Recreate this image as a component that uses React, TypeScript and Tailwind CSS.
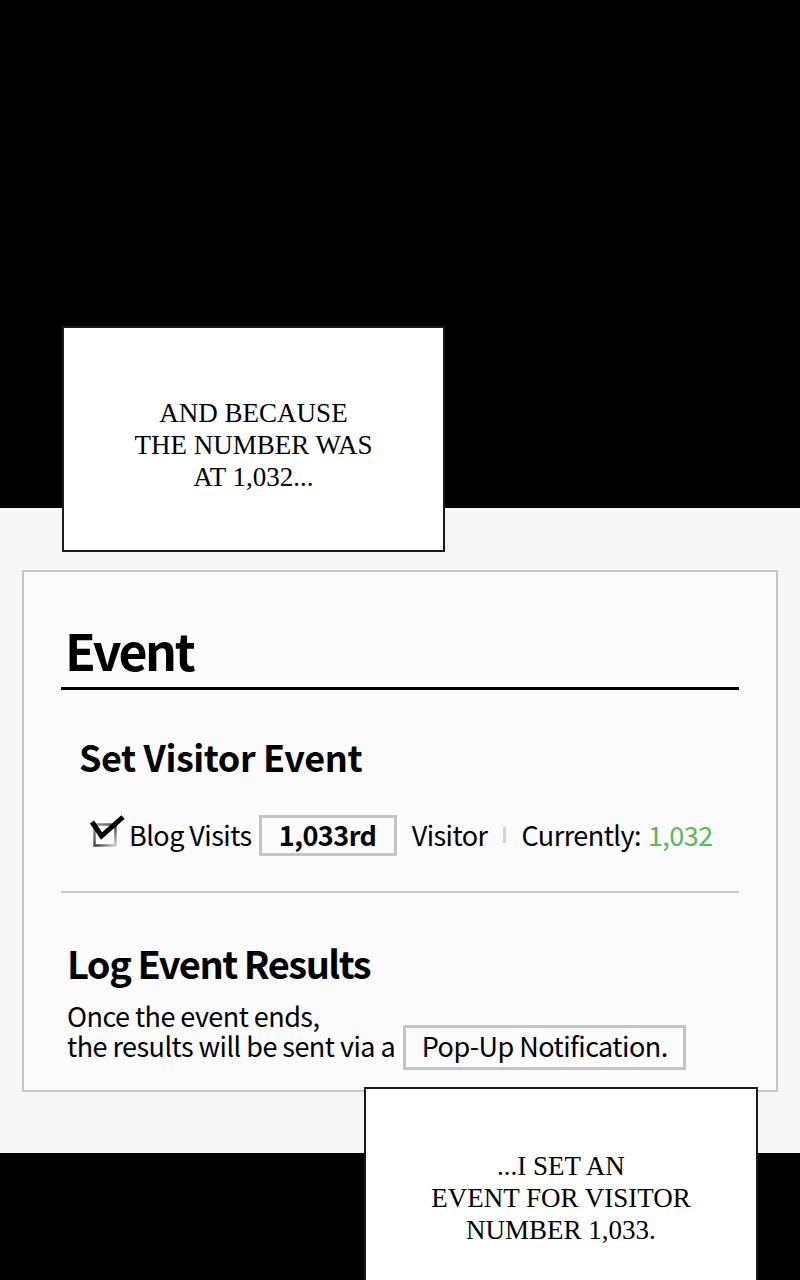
import React from 'react';

const caption = "font-['Liberation_Serif',serif] text-[27px] leading-[32px] text-black text-center uppercase";
const ui = "font-['Noto_Sans_CJK_KR','Noto_Sans',sans-serif] text-black";

function CheckMark() {
  return (
    <svg width="36" height="36" viewBox="0 0 36 36" className="shrink-0 overflow-visible">
      <defs>
        <linearGradient id="boxEdge" x1="0" y1="0" x2="1" y2="1">
          <stop offset="0" stopColor="#a0a0a0" />
          <stop offset="0.55" stopColor="#444" />
          <stop offset="1" stopColor="#d0d0d0" />
        </linearGradient>
      </defs>
      <rect x="4.5" y="7.5" width="21" height="21" fill="none" stroke="url(#boxEdge)" strokeWidth="2.5" />
      <path d="M2 5 L11.5 19 L33 0" fill="none" stroke="#000" strokeWidth="5" strokeLinejoin="miter" />
    </svg>
  );
}

function SettingsPanel() {
  return (
    <div className={`${ui} w-[756px] h-[522px] border-2 border-[#c6c6c6] bg-[#fbfbfb] px-[37px] pt-[52px]`}>
      <h1 className="text-[50px] font-bold leading-[50px] tracking-[-0.05em] pl-[4px]">Event</h1>
      <div className="mt-[13px] h-[3px] bg-black" />

      <h2 className="mt-[48px] pl-[18px] text-[36px] font-bold leading-[36px] tracking-[-0.012em]">Set Visitor Event</h2>

      <div className="mt-[41px] pl-[29px] flex items-center h-[40px] text-[27px] tracking-[-0.02em]">
        <CheckMark />
        <span className="ml-[3px]">Blog Visits</span>
        <span className="ml-[7px] h-[41px] w-[138px] border-[3px] border-[#c4c4c4] flex items-center justify-center font-bold">
          1,033rd
        </span>
        <span className="ml-[15px]">Visitor</span>
        <span className="ml-[16px] w-[3px] h-[16px] bg-[#d4d4d4]" />
        <span className="ml-[15px]">Currently:</span>
        <span className="ml-[7px] text-[#5cb85c]">1,032</span>
      </div>

      <div className="mt-[36px] h-[2px] bg-[#c8c8c8]" />

      <h2 className="mt-[51px] pl-[6px] text-[38px] font-bold leading-[38px] tracking-[-0.04em]">Log Event Results</h2>

      <div className="mt-[19px] pl-[6px] text-[27px] leading-[30px] tracking-[-0.02em]">
        <p>Once the event ends,</p>
        <div className="flex items-start h-[30px]">
          <span>the results will be sent via a</span>
          <span className="ml-[8px] -mt-[6px] h-[45px] w-[283px] border-[3px] border-[#c4c4c4] pt-[3px] text-center">
            Pop-Up Notification.
          </span>
        </div>
      </div>
    </div>
  );
}

export default function App() {
  return (
    <div className="relative w-[800px] h-[1280px] overflow-hidden bg-[#f6f6f6]">
      <div className="h-[508px] bg-black" />
      <div className="h-[645px] pt-[62px] pl-[22px]">
        <SettingsPanel />
      </div>
      <div className="h-[127px] bg-black" />

      <div className="absolute left-[62px] top-[326px] w-[383px] h-[226px] bg-white border-2 border-[#1a1a1a] flex items-center justify-center pt-[12px]">
        <p className={caption}>
          And because
          <br />
          the number was
          <br />
          at 1,032...
        </p>
      </div>

      <div className="absolute left-[364px] top-[1087px] w-[394px] h-[220px] bg-white border-2 border-[#1a1a1a] flex justify-center pt-[61px]">
        <p className={caption}>
          ...I set an
          <br />
          event for visitor
          <br />
          number 1,033.
        </p>
      </div>
    </div>
  );
}
